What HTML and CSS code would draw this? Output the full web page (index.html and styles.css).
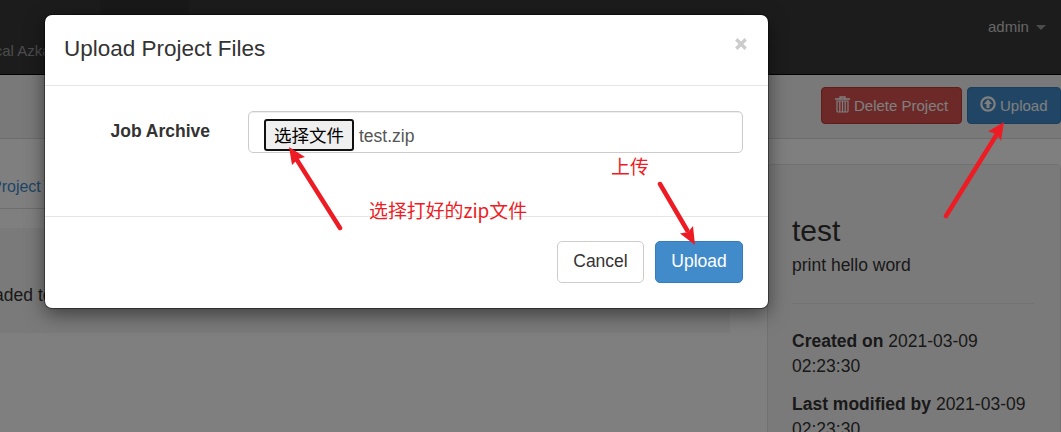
FILE: index.html
```html
<!DOCTYPE html>
<html lang="zh">
<head>
<meta charset="utf-8">
<title>Upload Project Files</title>
<link rel="stylesheet" href="styles.css">
</head>
<body>
<header class="navbar">
  <div class="brand">Local Azkaban</div>
  <div class="nav-tab"></div>
  <div class="user">admin <span class="caret"></span></div>
</header>
<div class="page-header">
  <button class="btn-sm danger"><svg width="15" height="17" viewBox="0 0 15 17" fill="none" stroke="currentColor"><path d="M0 3h15M5 2.500V1h5v1.500" stroke-width="1.300"/><path d="M2 5v10q0 1 1 1h9q1 0 1-1V5z" stroke-width="1.200"/><path d="M4.800 5v11M7.500 5v11M10.200 5v11" stroke-width="1.200"/></svg>Delete Project</button>
  <button class="btn-sm primary"><svg width="16" height="16" viewBox="0 0 16 16"><circle cx="8" cy="8" r="6.700" fill="none" stroke="currentColor" stroke-width="2.200"/><path d="M8 3.300 12 8H9.500v4H6.500V8H4z" fill="currentColor"/></svg>Upload</button>
</div>
<main class="content">
  <section class="flows">
    <nav class="tabs"><span>Project</span></nav>
    <div class="empty">uploaded to</div>
  </section>
  <aside class="well">
    <h3>test</h3>
    <p>print hello word</p>
    <hr>
    <p class="meta"><strong>Created on</strong> 2021-03-09 02:23:30</p>
    <p class="meta"><strong>Last modified by</strong> 2021-03-09 02:23:30</p>
  </aside>
</main>
<div class="backdrop"></div>
<div class="modal">
  <div class="modal-header"><h4>Upload Project Files</h4>
    <svg class="close" width="12" height="12" viewBox="0 0 12 12"><path d="M1.300 1.300 10.700 10.700M10.700 1.300 1.300 10.700" stroke="#ccc" stroke-width="3.400"/></svg></div>
  <div class="modal-body">
    <span class="label">Job Archive</span>
    <div class="file"><button class="choose">选择文件</button><span>test.zip</span></div>
  </div>
  <div class="modal-footer"><button class="btn">Cancel</button><button class="btn primary">Upload</button></div>
</div>
<svg class="arrows" width="1061" height="432" viewBox="0 0 1061 432" fill="#ed1c24" stroke="#ed1c24" stroke-width="4.500" stroke-linecap="round">
  <path d="M340 228 297 160M660 184 687 230M946 216 997 134"/>
  <path stroke="none" d="M289 147 305 157 298 159 292 165zM695 245 680 233.500 688 232 693 226zM1004 122 988 131.500 997 134 1001 141z"/>
</svg>
<div class="note note-choose">选择打好的zip文件</div>
<div class="note note-upload">上传</div>
</body>
</html>
```
FILE: styles.css
```css
* { box-sizing: border-box; }
body {
  margin: 0;
  height: 432px;
  overflow: hidden;
  position: relative;
  background: #fff;
  color: #333;
  font: 17.5px/25px "Liberation Sans", "Noto Sans CJK SC", sans-serif;
}
h3, h4, p { margin: 0; font-weight: 400; }
button { font-family: inherit; }
.navbar {
  display: flex;
  height: 75px;
  background: #383838;
  border-bottom: 1px solid #060606;
  font-size: 15px;
}
.brand { width: 100px; padding-top: 38px; margin-left: -22px; color: #999; white-space: nowrap; }
.nav-tab { width: 89px; margin-left: 22px; background: #323232; }
.user { margin-left: auto; padding: 14px 15px 0 0; color: #ccc; }
.caret {
  display: inline-block;
  margin-left: 3px;
  vertical-align: 2px;
  border: 5px solid transparent;
  border-top-color: #999;
  border-bottom: 0;
}
.page-header {
  display: flex;
  justify-content: flex-end;
  gap: 5px;
  height: 64px;
  padding-top: 12px;
  background: #f3f3f3;
  border-bottom: 1px solid #dadada;
}
.btn-sm {
  display: flex;
  align-items: center;
  gap: 4px;
  height: 37px;
  padding: 0 0 0 13px;
  border: 1px solid #357ebd;
  border-radius: 4px;
  color: #fff;
  font-size: 15px;
  white-space: nowrap;
}
.danger { background: #d9534f; border-color: #c43b37; width: 141px; }
.primary { background: #428bca; border-color: #357ebd; color: #fff; }
.btn-sm.primary { width: 94px; padding-left: 12px; }
.btn-sm svg { flex: none; margin-top: -3px; }
.content { display: grid; grid-template-columns: 730px 294px; column-gap: 37px; height: 293px; }
.flows { padding-top: 25px; }
.tabs { height: 45px; padding-top: 10px; border-bottom: 1px solid #ddd; color: #428bca; font-size: 16px; }
.tabs span { margin-left: -9px; }
.empty { height: 105px; margin-top: 19px; padding-top: 55px; background: #f5f5f5; text-indent: -39px; }
.well {
  height: 268px;
  margin-top: 25px;
  padding: 48px 25px 0 24px;
  background: #f5f5f5;
  border: 1px solid #e3e3e3;
  border-bottom: 0;
  border-radius: 5px 5px 0 0;
  overflow: hidden;
}
.well h3 { font-size: 30px; line-height: 36px; margin-bottom: 4px; }
.well hr { margin: 25px 0; border: 0; border-top: 1px solid #e6e6e6; }
.meta { margin-bottom: 13px; }
.backdrop { position: absolute; inset: 0; background: rgba(0, 0, 0, .5); }
.modal {
  position: absolute;
  left: 45px;
  top: 15px;
  width: 723px;
  height: 293px;
  background: #fff;
  border-radius: 7px;
  box-shadow: 0 0 0 1px rgba(0, 0, 0, .4), 0 6px 19px rgba(0, 0, 0, .5);
}
.modal-header {
  display: flex;
  justify-content: space-between;
  height: 71px;
  padding: 20px 21px 0 19px;
  border-bottom: 1px solid #e5e5e5;
}
.modal-header h4 { font-size: 22.5px; line-height: 28px; }
.close { margin-top: 3px; }
.modal-body { display: flex; height: 130px; padding: 25px 25px 0 0; }
.label { width: 165px; margin-right: 38px; padding-top: 8px; text-align: right; font-weight: 700; }
.file {
  display: flex;
  flex: 1;
  gap: 5px;
  height: 42px;
  padding: 7px 15px 0;
  border: 1px solid #ccc;
  border-radius: 5px;
  box-shadow: inset 0 1px 1px rgba(0, 0, 0, .075);
  color: #555;
  line-height: 34px;
}
.choose {
  width: 90px;
  height: 32px;
  padding: 0 0 2px;
  border: 2px solid #101010;
  border-radius: 3px;
  background: #efefef;
  color: #000;
  font-size: 17.5px;
}
.modal-footer {
  display: flex;
  justify-content: flex-end;
  gap: 11px;
  padding: 24px 25px 0;
  border-top: 1px solid #e5e5e5;
}
.btn {
  height: 42px;
  width: 87px;
  padding: 0 0 2px;
  border: 1px solid #ccc;
  border-radius: 5px;
  background: #fff;
  color: #333;
  font-size: 17.5px;
}
.btn.primary { width: 88px; background: #428bca; border-color: #357ebd; color: #fff; }
.arrows { position: absolute; left: 0; top: 0; }
.note { position: absolute; color: #ed1c24; font: 18.9px/26px "Noto Sans CJK SC", sans-serif; white-space: nowrap; }
.note-choose { left: 369px; top: 197px; }
.note-upload { left: 611px; top: 153px; }
```
